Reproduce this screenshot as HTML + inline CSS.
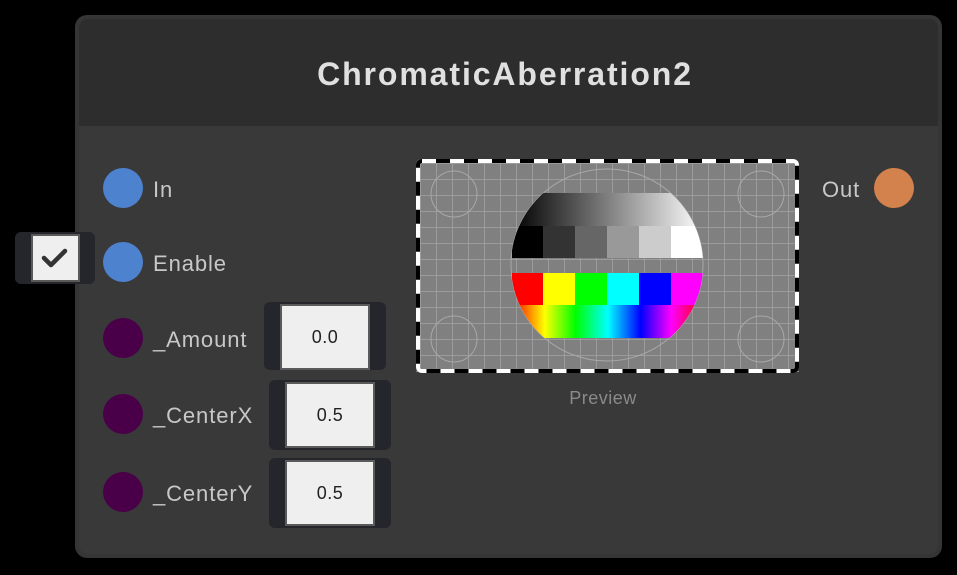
<!DOCTYPE html>
<html><head><meta charset="utf-8"><style>
body{margin:0;width:957px;height:575px;background:#000;position:relative;overflow:hidden;font-family:"Liberation Sans",sans-serif}
.node{position:absolute;left:75px;top:15px;width:867px;height:543px;border-radius:12px;background:#353535;}
.hdr{position:absolute;left:4px;top:4px;right:4px;height:107px;background:#2d2d2d;border-radius:9px 9px 0 0}
.bdy{position:absolute;left:4px;top:111px;right:4px;bottom:4px;background:#393939;border-radius:0 0 9px 9px}
.title{position:absolute;left:0;width:100%;top:56px;text-align:center;font-size:32px;font-weight:bold;color:#e0e0e0;letter-spacing:1.9px;padding-left:53px;box-sizing:border-box}
.dot{position:absolute;width:40px;height:40px;border-radius:50%}
.lbl{position:absolute;font-size:22px;color:#c8c8c8;line-height:24px;letter-spacing:0.9px}
.fc{position:absolute;background:#25252c;border-radius:6px}
.fi{position:absolute;background:#efefef;border:2px solid #5a5a5a;box-sizing:border-box;font-size:18px;color:#222;text-align:center;letter-spacing:0.5px}
</style></head><body>
<div class="node"><div class="hdr"></div><div class="bdy"></div></div>
<div class="title">ChromaticAberration2</div>

<div class="dot" style="left:103px;top:168px;background:#4d82cf"></div>
<div class="lbl" style="left:153px;top:178px">In</div>
<div class="dot" style="left:103px;top:242px;background:#4d82cf"></div>
<div class="lbl" style="left:153px;top:252px">Enable</div>
<div class="dot" style="left:103px;top:318px;background:#4a0049"></div>
<div class="lbl" style="left:153px;top:328px">_Amount</div>
<div class="dot" style="left:103px;top:394px;background:#4a0049"></div>
<div class="lbl" style="left:153px;top:404px">_CenterX</div>
<div class="dot" style="left:103px;top:472px;background:#4a0049"></div>
<div class="lbl" style="left:153px;top:482px">_CenterY</div>

<div class="fc" style="left:15px;top:232px;width:80px;height:52px"></div>
<div class="fi" style="left:31px;top:234px;width:49px;height:48px">
<svg width="45" height="44" viewBox="0 0 45 44"><path d="M11 22 L18 29 L32 15" fill="none" stroke="#333" stroke-width="4.5" stroke-linecap="round" stroke-linejoin="round"/></svg></div>

<div class="fc" style="left:264px;top:302px;width:122px;height:68px"></div>
<div class="fi" style="left:280px;top:304px;width:90px;height:66px;line-height:62px">0.0</div>
<div class="fc" style="left:269px;top:380px;width:122px;height:70px"></div>
<div class="fi" style="left:285px;top:382px;width:90px;height:66px;line-height:62px">0.5</div>
<div class="fc" style="left:269px;top:458px;width:122px;height:70px"></div>
<div class="fi" style="left:285px;top:460px;width:90px;height:66px;line-height:62px">0.5</div>

<svg style="position:absolute;left:416px;top:159px" width="383" height="214" viewBox="0 0 383 214">
<defs>
<clipPath id="c"><circle cx="191" cy="106" r="96"/></clipPath>
<linearGradient id="g" x1="0" x2="1"><stop offset="0" stop-color="#000"/><stop offset="1" stop-color="#fff"/></linearGradient>
<linearGradient id="r" x1="0" x2="1"><stop offset="0" stop-color="#f00"/><stop offset="0.17" stop-color="#ff0"/><stop offset="0.33" stop-color="#0f0"/><stop offset="0.5" stop-color="#0ff"/><stop offset="0.67" stop-color="#00f"/><stop offset="0.83" stop-color="#f0f"/><stop offset="1" stop-color="#f00"/></linearGradient>
<pattern id="p" width="16" height="16" patternUnits="userSpaceOnUse" x="4" y="4"><path d="M0 0H16M0 0V16" stroke="#a4a4a4" stroke-width="1.5" fill="none"/></pattern>
</defs>
<rect x="0" y="0" width="383" height="214" rx="5" fill="#808080"/>
<rect x="0" y="0" width="383" height="214" fill="url(#p)"/>
<g fill="none" stroke="#a8a8a8" stroke-width="1"><circle cx="191" cy="106" r="96"/><circle cx="38" cy="35" r="23"/><circle cx="345" cy="35" r="23"/><circle cx="38" cy="180" r="23"/><circle cx="345" cy="180" r="23"/></g>
<g clip-path="url(#c)">
<rect x="96" y="34" width="192" height="65" fill="url(#g)"/>
<rect x="96" y="67" width="32" height="32" fill="#000"/><rect x="127" y="67" width="32" height="32" fill="#333"/><rect x="159" y="67" width="32" height="32" fill="#666"/><rect x="191" y="67" width="32" height="32" fill="#999"/><rect x="223" y="67" width="32" height="32" fill="#ccc"/><rect x="255" y="67" width="33" height="32" fill="#fff"/>
<rect x="96" y="114" width="32" height="33" fill="#f00"/><rect x="127" y="114" width="32" height="33" fill="#ff0"/><rect x="159" y="114" width="32" height="33" fill="#0f0"/><rect x="191" y="114" width="32" height="33" fill="#0ff"/><rect x="223" y="114" width="32" height="33" fill="#00f"/><rect x="255" y="114" width="33" height="33" fill="#f0f"/>
<rect x="96" y="146" width="192" height="33" fill="url(#r)"/>
</g>
<rect x="2" y="2" width="379" height="210" rx="4" fill="none" stroke="#000" stroke-width="4"/>
<rect x="2" y="2" width="379" height="210" rx="4" fill="none" stroke="#fff" stroke-width="4" stroke-dasharray="14 14"/>
</svg>
<div style="position:absolute;left:553px;top:388px;width:100px;text-align:center;font-size:18px;color:#8a8a8a;letter-spacing:0.5px">Preview</div>

<div class="lbl" style="left:822px;top:178px">Out</div>
<div class="dot" style="left:874px;top:168px;background:#d4824d"></div>
</body></html>
